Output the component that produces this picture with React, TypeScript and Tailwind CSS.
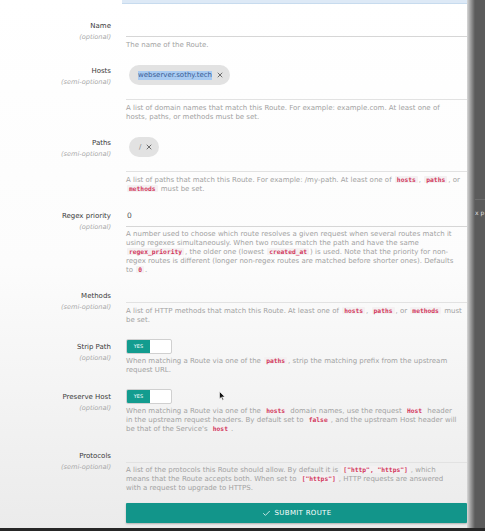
import type { ReactNode } from 'react';
import { Check, X } from 'lucide-react';

const font = "font-['DejaVu_Sans',sans-serif]";

function Code({ children }: { children: ReactNode }) {
  return (
    <code className="font-['DejaVu_Sans_Mono',monospace] text-[6.3px] leading-none font-bold text-[#d2375c] bg-[#f4f1f2] px-[2px] mx-[1px] rounded-[1px]">
      {children}
    </code>
  );
}

function Help({ className, children }: { className: string; children: ReactNode }) {
  return <p className={`text-[7px] leading-[9px] text-[#a2a2a2] ${className}`}>{children}</p>;
}

function Field({
  label,
  hint,
  className,
  labelPad,
  children,
}: {
  label: string;
  hint: string;
  className: string;
  labelPad: string;
  children: ReactNode;
}) {
  return (
    <div className={`flex ${className}`}>
      <div className={`w-[111px] shrink-0 text-right ${labelPad}`}>
        <div className="text-[7px] leading-[12px] text-[#3a3a3a]">{label}</div>
        <div className="text-[6.6px] leading-[10px] italic text-[#a9a9a9]">{hint}</div>
      </div>
      <div className="ml-[15px] flex-1 min-w-0">{children}</div>
    </div>
  );
}

function Toggle() {
  return (
    <div className="flex w-[46px] h-[15px] border border-[#d0d0d0] rounded-[2px] bg-white overflow-hidden">
      <div className="w-[23px] bg-[#139c8f] text-white text-[5px] flex items-center justify-center">YES</div>
    </div>
  );
}

function Chip({ children }: { children: ReactNode }) {
  return (
    <div className="flex items-center h-[20px] rounded-full bg-[#e2e2e2] pl-[9px] pr-[6px] gap-[4px]">
      {children}
      <X className="w-[8px] h-[8px] text-[#555]" strokeWidth={2.5} />
    </div>
  );
}

export default function App() {
  return (
    <div className={`${font} relative w-[485px] h-[531px] overflow-hidden bg-[#5b5b5b] flex flex-col`}>
      <div className="flex flex-1 min-h-0">
        {/* form panel */}
        <div className="w-[467px] shrink-0 bg-gradient-to-b from-white via-[#fcfcfc] to-[#ebebeb]">
          <div className="ml-[122px] h-[4px] bg-[#dde9f6] border-b border-[#c7dbee]" />

          <Field label="Name" hint="(optional)" className="mt-[12px]" labelPad="pt-[4px]">
            <div className="h-[21px] border-b border-[#d6d6d6]" />
            <Help className="mt-[4px]">The name of the Route.</Help>
          </Field>

          <Field label="Hosts" hint="(semi-optional)" className="mt-[11px]" labelPad="pt-[4px]">
            <div className="h-[39px] border-b border-[#e2e2e2] pt-[4px] pl-[3px] flex items-start">
              <Chip>
                <span className="text-[7px] leading-[9px] bg-[#a9cbf2] text-[#3a5c93]">webserver.sothy.tech</span>
              </Chip>
            </div>
            <Help className="mt-[4px]">
              A list of domain names that match this Route. For example: example.com. At least one of
              <br />
              hosts, paths, or methods must be set.
            </Help>
          </Field>

          <Field label="Paths" hint="(semi-optional)" className="mt-[11px]" labelPad="pt-[4px]">
            <div className="h-[39px] border-b border-[#e2e2e2] pt-[4px] pl-[3px] flex items-start">
              <Chip>
                <span className="text-[7px] leading-[9px] text-[#888] pl-[1px]">/</span>
              </Chip>
            </div>
            <Help className="mt-[4px]">
              A list of paths that match this Route. For example: /my-path. At least one of <Code>hosts</Code>, <Code>paths</Code>, or
              <br />
              <Code>methods</Code> must be set.
            </Help>
          </Field>

          <Field label="Regex priority" hint="(optional)" className="mt-[12px]" labelPad="pt-[4px]">
            <div className="h-[21px] border-b border-[#d6d6d6] flex items-center pl-[1px] text-[7.5px] text-[#555]">0</div>
            <Help className="mt-[3px]">
              A number used to choose which route resolves a given request when several routes match it
              <br />
              using regexes simultaneously. When two routes match the path and have the same
              <br />
              <Code>regex_priority</Code>, the older one (lowest <Code>created_at</Code>) is used. Note that the priority for non-
              <br />
              regex routes is different (longer non-regex routes are matched before shorter ones). Defaults
              <br />
              to <Code>0</Code>.
            </Help>
          </Field>

          <Field label="Methods" hint="(semi-optional)" className="mt-[11px]" labelPad="pt-[4px]">
            <div className="h-[17px] border-b border-[#e2e2e2]" />
            <Help className="mt-[4px]">
              A list of HTTP methods that match this Route. At least one of <Code>hosts</Code>, <Code>paths</Code>, or <Code>methods</Code> must
              <br />
              be set.
            </Help>
          </Field>

          <Field label="Strip Path" hint="(optional)" className="mt-[14px]" labelPad="pt-[2px]">
            <Toggle />
            <Help className="mt-[3px]">
              When matching a Route via one of the <Code>paths</Code>, strip the matching prefix from the upstream
              <br />
              request URL.
            </Help>
          </Field>

          <Field label="Preserve Host" hint="(optional)" className="mt-[14px]" labelPad="pt-[2px]">
            <Toggle />
            <Help className="mt-[3px]">
              When matching a Route via one of the <Code>hosts</Code> domain names, use the request <Code>Host</Code> header
              <br />
              in the upstream request headers. By default set to <Code>false</Code>, and the upstream Host header will
              <br />
              be that of the Service's <Code>host</Code>.
            </Help>
          </Field>

          <Field label="Protocols" hint="(semi-optional)" className="mt-[12px]" labelPad="pt-[4px]">
            <div className="h-[17px] border-b border-[#e2e2e2]" />
            <Help className="mt-[3px]">
              A list of the protocols this Route should allow. By default it is <Code>["http", "https"]</Code>, which
              <br />
              means that the Route accepts both. When set to <Code>["https"]</Code>, HTTP requests are answered
              <br />
              with a request to upgrade to HTTPS.
            </Help>
          </Field>

          <div className="ml-[126px] mt-[10px] h-[20px] bg-[#12958a] text-white text-[7px] tracking-[0.3px] flex items-center justify-center gap-[4px] rounded-[1px] shadow-[0_1px_2px_rgba(0,0,0,0.25)]">
            <Check className="w-[9px] h-[9px]" strokeWidth={2} />
            <span>SUBMIT ROUTE</span>
          </div>
        </div>

        {/* backdrop beyond panel */}
        <div className="w-[8px] shrink-0 bg-gradient-to-r from-[#d8d8d8] to-[#5b5b5b]" />
        <div className="flex-1 flex flex-col">
          <div className="mt-[199px] border-t border-[#6c6c6c]" />
          <div className="mt-[8px] text-[6px] text-[#e0e0e0] whitespace-nowrap">x p</div>
        </div>
      </div>
      <div className="h-[3px] bg-[#262626]" />

      {/* mouse pointer */}
      <svg className="absolute left-[219px] top-[391px]" width="7" height="10" viewBox="0 0 7 10">
        <path d="M0.5 0.5 L0.5 8 L2.3 6.3 L3.6 9.3 L4.7 8.8 L3.4 5.9 L6 5.9 Z" fill="#111" stroke="#fff" strokeWidth="0.6" />
      </svg>
    </div>
  );
}
